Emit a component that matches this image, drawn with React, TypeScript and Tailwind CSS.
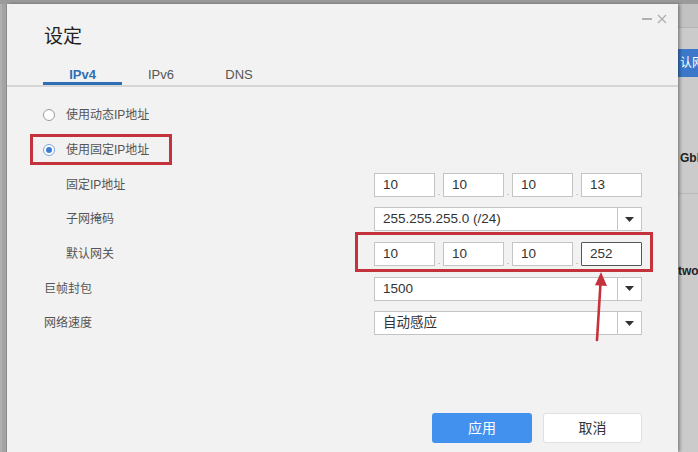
import React from "react";

const cjk = "font-['Liberation_Sans','Noto_Sans_CJK_SC',sans-serif]";

const IpField = ({ parts, focusLast }: { parts: string[]; focusLast?: boolean }) => (
  <div className="flex items-end w-[268px] h-[24px]">
    {parts.map((p, i) => (
      <React.Fragment key={i}>
        {i > 0 && <span className="w-[8px] text-center text-[9px] leading-[10px] text-[#999]">.</span>}
        <div
          className={
            "w-[61px] h-[24px] bg-white border px-[8px] flex items-center text-[13.5px] text-[#333] " +
            (focusLast && i === 3 ? "border-[#555] rounded-[1px]" : "border-[#c4c4c4]")
          }
        >
          {p}
        </div>
      </React.Fragment>
    ))}
  </div>
);

const Select = ({ value }: { value: string }) => (
  <div className="flex w-[268px] h-[24px] bg-white border border-[#c4c4c4]">
    <div className="flex-1 px-[8px] flex items-center text-[13.5px] text-[#333]">{value}</div>
    <div className="w-[24px] border-l border-[#c4c4c4] flex items-center justify-center">
      <svg width="9" height="5" viewBox="0 0 9 5">
        <path d="M0 0h9L4.5 5z" fill="#333" />
      </svg>
    </div>
  </div>
);

const Row = ({ label, indent, children }: { label: string; indent?: boolean; children?: React.ReactNode }) => (
  <div className="flex items-center h-[34.7px]">
    <div className={"w-[367px] text-[12px] text-[#555] " + (indent ? "pl-[59px]" : "pl-[37px]")}>{label}</div>
    {children}
  </div>
);

const Radio = ({ checked, label }: { checked?: boolean; label: string }) => (
  <div className="flex items-center h-[34.7px] pl-[36px]">
    <span
      className={
        "w-[12px] h-[12px] rounded-full bg-white border flex items-center justify-center " +
        (checked ? "border-[#7aa6dc]" : "border-[#9a9a9a]")
      }
    >
      {checked && <span className="w-[6px] h-[6px] rounded-full bg-[#3c7fd2]" />}
    </span>
    <span className="ml-[11px] text-[12px] text-[#555]">{label}</span>
  </div>
);

export default function App() {
  return (
    <div className={"w-[698px] h-[452px] overflow-hidden bg-[#9b9b9b] pt-[4px] flex " + cjk}>
      {/* left edge of page behind */}
      <div className="w-[7px] bg-[#a4a4a4] border-l-2 border-[#b0b0b0] border-r border-r-[#8e8e8e]" />

      {/* dialog */}
      <div className="relative w-[671px] bg-[#f2f2f2] flex flex-col shadow-[2px_0_3px_rgba(0,0,0,0.35)] z-10">
        <div className="absolute right-[11px] top-[10px] flex items-center gap-[5px]">
          <span className="w-[10px] h-[1.5px] bg-[#b0b0b0]" />
          <svg width="10" height="10" viewBox="0 0 10 10">
            <path d="M1 1l8 8M9 1l-8 8" stroke="#b0b0b0" strokeWidth="1.4" />
          </svg>
        </div>

        <div className="pl-[37px] pt-[22px] text-[19px] leading-[22px] text-[#222]">设定</div>

        <div className="mt-[17px] flex pl-[36px] border-b-2 border-[#d6d6d6]">
          <div className="w-[79px] h-[20px] text-center text-[13px] font-bold text-[#2f6db5] border-b-[3px] border-[#2f6db5] -mb-[2px]">
            IPv4
          </div>
          <div className="w-[78px] text-center text-[13px] text-[#555]">IPv6</div>
          <div className="w-[78px] text-center text-[13px] text-[#555]">DNS</div>
        </div>

        <div className="pt-[11.5px]">
          <Radio label="使用动态IP地址" />
          <Radio checked label="使用固定IP地址" />
          <Row label="固定IP地址" indent>
            <IpField parts={["10", "10", "10", "13"]} />
          </Row>
          <Row label="子网掩码" indent>
            <Select value="255.255.255.0 (/24)" />
          </Row>
          <Row label="默认网关" indent>
            <IpField parts={["10", "10", "10", "252"]} focusLast />
          </Row>
          <Row label="巨帧封包">
            <Select value="1500" />
          </Row>
          <Row label="网络速度">
            <Select value="自动感应" />
          </Row>
        </div>

        <div className="flex-1" />
        <div className="flex justify-end gap-[11px] pr-[36px] pb-[9px]">
          <button className="w-[100px] h-[30px] rounded-[3px] bg-[#4391ee] text-white text-[14px]">应用</button>
          <button className="w-[99px] h-[30px] rounded-[3px] bg-white border border-[#e0e0e0] text-[#333] text-[14px]">
            取消
          </button>
        </div>

        {/* annotations */}
        <div className="absolute left-[23px] top-[130px] w-[142px] h-[31px] border-[3px] border-[#c4323c]" />
        <div className="absolute left-[348px] top-[228px] w-[298px] h-[40px] border-[3px] border-[#c4323c]" />
        <svg className="absolute left-[580px] top-[264px]" width="24" height="76" viewBox="0 0 24 76">
          <path d="M10 72L13.6 14" stroke="#c4323c" strokeWidth="2.6" strokeLinecap="round" />
          <path d="M14 4L20 18L8 17.3z" fill="#c4323c" />
        </svg>
      </div>

      {/* page behind, right side */}
      <div className="flex-1 flex flex-col bg-[#cbcbcb] overflow-hidden whitespace-nowrap">
        <div className="h-[24px] bg-[#c2c2c2] border-b border-[#b4b4b4]" />
        <div className="mt-[21px] h-[28px] bg-[#3b78c9] text-white text-[12px] flex items-center pl-[2px]">认网</div>
        <div className="mt-[72px] text-[12px] font-bold text-[#222] pl-[2px]">GbE</div>
        <div className="mt-[26px] border-b border-[#b8b8b8]" />
        <div className="mt-[68px] text-[12px] font-bold text-[#222]">twork</div>
      </div>
    </div>
  );
}
